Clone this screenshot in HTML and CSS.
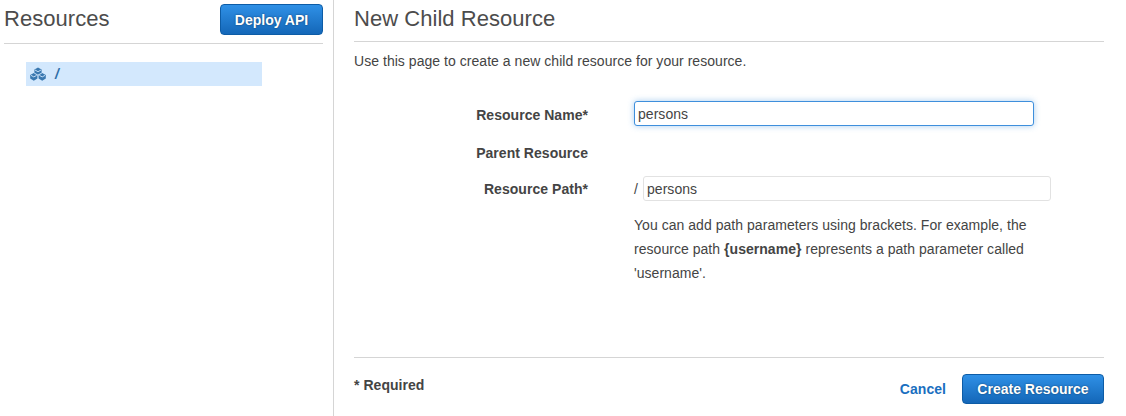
FILE: index.html
```html
<!DOCTYPE html>
<html lang="en">
<head>
<meta charset="utf-8">
<title>New Child Resource</title>
<link rel="stylesheet" href="styles.css">
</head>
<body>
<div class="layout">
  <aside class="sidebar">
    <div class="side-head">
      <h2 class="side-title">Resources</h2>
      <button class="btn btn-deploy">Deploy API</button>
    </div>
    <div class="tree-row">
      <svg class="tree-icon" width="16" height="14" viewBox="0 0 16 14">
        <g fill="#3a78b0">
          <path d="M4.4 2.6 8 .5l3.6 2.1v3.6L8 8.3 4.4 6.2z"/>
          <path d="M.2 8 3.8 5.9 7.4 8v3.6l-3.6 2.1-3.6-2.1z"/>
          <path d="M8.6 8l3.6-2.1L15.8 8v3.6l-3.6 2.1-3.6-2.1z"/>
        </g>
        <g fill="none" stroke="#d3e8fd" stroke-width=".9">
          <path d="M5 3 8 4.7 11 3"/>
          <path d="M4.4 6.2 7.9 8.1l3.7-1.9"/>
          <path d="M1 8.4l2.8 1.5 2.8-1.5"/>
          <path d="M9.4 8.4l2.8 1.5L15 8.4"/>
        </g>
      </svg>
      <span class="tree-path">/</span>
    </div>
  </aside>
  <main class="content">
    <h2 class="page-title">New Child Resource</h2>
    <p class="intro">Use this page to create a new child resource for your resource.</p>
    <div class="form">
      <div class="row row-name">
        <label class="label">Resource Name*</label>
        <input class="input input-focus" type="text" value="persons">
      </div>
      <div class="row row-parent">
        <label class="label">Parent Resource</label>
      </div>
      <div class="row row-path">
        <label class="label">Resource Path*</label>
        <span class="slash">/</span>
        <input class="input input-path" type="text" value="persons">
      </div>
      <p class="help">You can add path parameters using brackets. For example, the resource path <b>{username}</b> represents a path parameter called 'username'.</p>
    </div>
    <div class="footer">
      <span class="required">* Required</span>
      <div class="actions">
        <a class="cancel">Cancel</a>
        <button class="btn btn-create">Create Resource</button>
      </div>
    </div>
  </main>
</div>
</body>
</html>
```
FILE: styles.css
```css
* { box-sizing: border-box; }
html, body { margin: 0; height: 100%; }
body {
  background: #fff;
  color: #444;
  font-family: "Liberation Sans", Arial, sans-serif;
  font-size: 14px;
  letter-spacing: .04px;
  overflow: hidden;
}
.layout { display: flex; height: 416px; }
.sidebar {
  width: 334px;
  padding: 0 10px 0 4px;
  border-right: 1px solid #d5d5d5;
}
.side-head {
  height: 44px;
  display: flex;
  justify-content: space-between;
  align-items: flex-start;
  border-bottom: 1px solid #d5d5d5;
  padding-top: 4px;
}
.side-title, .page-title {
  margin: 0;
  font-weight: 400;
  font-size: 22px;
  line-height: 30px;
  color: #4c4c4c;
}
.btn {
  color: #fff;
  font-family: inherit;
  font-weight: 700;
  font-size: 14px;
  letter-spacing: 0;
  border: 1px solid #0d5ca6;
  border-radius: 4px;
  background: linear-gradient(#2f90e6, #1467b8);
  text-shadow: 0 0 2px rgba(0, 0, 0, .5);
  padding: 0;
}
.btn-deploy { width: 103px; height: 31px; }
.tree-row {
  margin: 18px 0 0 22px;
  width: 236px;
  height: 24px;
  background: #d3e8fd;
  display: flex;
  align-items: center;
  padding-left: 4px;
}
.tree-icon { display: block; }
.tree-path {
  margin-left: 9px;
  color: #2f6fa8;
  font-style: italic;
  font-weight: 700;
  font-size: 14px;
}
.content {
  width: 750px;
  margin-left: 20px;
  display: flex;
  flex-direction: column;
  height: 416px;
}
.page-title {
  height: 42px;
  padding-top: 4px;
  border-bottom: 1px solid #d5d5d5;
}
.intro { margin: 11px 0 0; line-height: 16px; color: #444; }
.form { flex: 1; padding-top: 32px; }
.row { display: flex; align-items: center; }
.label {
  width: 234px;
  text-align: right;
  font-weight: 700;
  color: #444;
  flex: none;
}
.row-name { height: 25px; }
.row-name .label { padding-top: 2px; }
.row-parent { height: 20px; margin-top: 17px; }
.row-path { height: 25px; margin-top: 13px; }
.input {
  font-family: inherit;
  font-size: 14px;
  letter-spacing: inherit;
  color: #444;
  height: 25px;
  padding: 0 3px;
  border: 1px solid #e2e2e2;
  border-radius: 3px;
  outline: none;
}
.input-focus {
  width: 400px;
  margin-left: 46px;
  border-color: #3e8fdc;
  box-shadow: 0 0 6px rgba(62, 143, 220, .45);
}
.slash { margin-left: 46px; width: 9px; flex: none; }
.input-path { width: 408px; }
.help {
  margin: 12px 0 0 280px;
  width: 420px;
  line-height: 24px;
  color: #444;
}
.footer {
  height: 59px;
  border-top: 1px solid #d5d5d5;
  display: flex;
  justify-content: space-between;
  align-items: flex-start;
}
.required { font-weight: 700; margin-top: 19px; color: #444; }
.actions { display: flex; align-items: center; gap: 16px; padding-top: 16px; }
.cancel { color: #1a6fc0; font-weight: 700; }
.btn-create { width: 142px; height: 30px; }
```
